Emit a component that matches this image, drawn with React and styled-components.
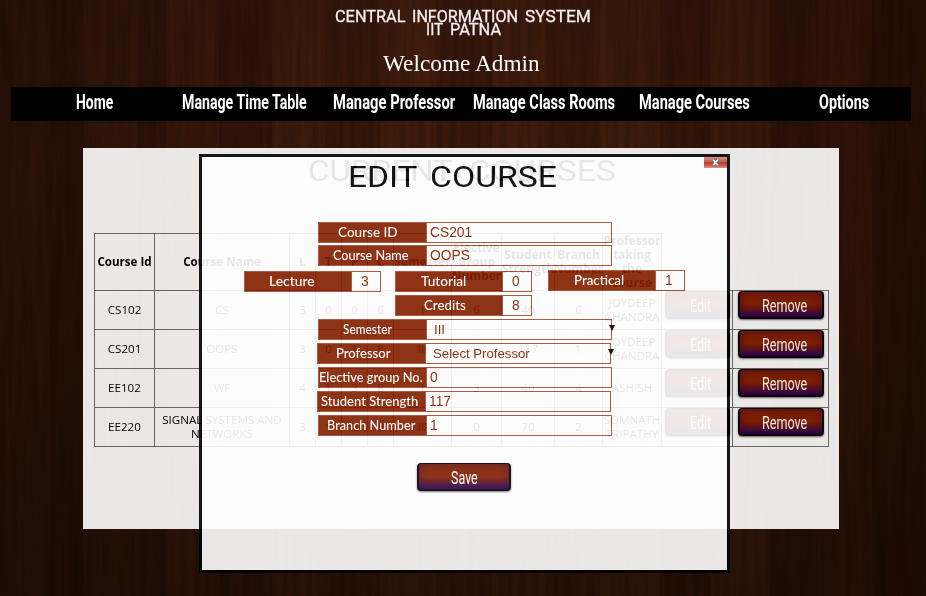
import React, { useLayoutEffect, useRef, useState } from "react";
import styled, { createGlobalStyle } from "styled-components";

const Global = createGlobalStyle`
  * { box-sizing: border-box; }
  html, body { margin: 0; padding: 0; background: #2a1006; }
  body { overflow: hidden; }
`;

const Page = styled.div`
  position: relative;
  width: 926px;
  height: 596px;
  overflow: hidden;
  padding: 0 11px;
  background:
    radial-gradient(ellipse 75% 85% at 50% 25%, rgba(0, 0, 0, 0) 20%, rgba(0, 0, 0, 0.36) 100%),
    linear-gradient(90deg, #35160a 0 50px, #301308 50px 83px, #38180b 83px 137px, #33150a 137px 166px,
      #3c190b 166px 219px, #34150a 219px 272px, #3e1b0d 272px 325px, #38170a 325px 380px,
      #401c0d 380px 436px, #3a180b 436px 492px, #401c0d 492px 545px, #3a180b 545px 600px,
      #3f1c0d 600px 660px, #36160a 660px 710px, #3e1c0d 710px 770px, #33140a 770px 818px,
      #39170a 818px 872px, #301307 872px 926px);
`;

const Grain = styled.svg`
  position: absolute;
  inset: 0;
  opacity: 0.22;
`;

const Header = styled.header`
  position: relative;
  height: 87px;
  padding-top: 10px;
  display: flex;
  flex-direction: column;
  align-items: center;
  color: #f6eff4;
  font: 400 17px/13px Roboto, sans-serif;
`;

const Welcome = styled.div`
  margin-top: 14px;
  margin-right: 3px;
  font: 23px/27px "Liberation Serif", serif;
  color: #fff;
`;

const TitleLine = styled.div`
  display: flex;
  gap: 7px;
  height: 13px;
  -webkit-text-stroke: 0.3px #f6eff4;
`;

const Nav = styled.nav`
  position: relative;
  width: 900px;
  height: 34px;
  padding-left: 8px;
  background: #000;
  display: grid;
  grid-template-columns: repeat(6, 150px);
`;

const NavItem = styled.a`
  display: flex;
  justify-content: center;
  color: #fff;
  font: 700 19.5px/31px Roboto, sans-serif;
`;

const FitBox = styled.span`
  display: block;
  flex: none;
  width: ${(p) => p.$w}px;
  white-space: nowrap;
`;

const FitInner = styled.span`
  display: inline-block;
  transform-origin: 0 50%;
`;

// Squeezes or stretches one line of text to a fixed width.
function Fit({ w, children }) {
  const ref = useRef(null);
  const [scale, setScale] = useState(1);
  useLayoutEffect(() => {
    setScale(w / ref.current.offsetWidth);
  }, [w]);
  return (
    <FitBox $w={w}>
      <FitInner ref={ref} style={{ transform: `scaleX(${scale})` }}>{children}</FitInner>
    </FitBox>
  );
}

const Panel = styled.main`
  position: relative;
  width: 756px;
  height: 381px;
  margin: 27px 0 0 72px;
  padding: 5px 0 0 11px;
  background: #fff;
  opacity: 0.9;
`;

const PanelTitle = styled.h1`
  display: flex;
  gap: 16px;
  margin: 0;
  height: 80px;
  padding-left: 214px;
  font: 400 30px/35px Roboto, sans-serif;
  color: #000;
`;

const Row = styled.div`
  display: grid;
  width: max-content;
  grid-template-columns: ${(p) => (p.$head ? "61px 135px repeat(4, 26px) 58px 50px 53px 48px 59px" : "61px 135px repeat(4, 26px) 58px 50px 53px 48px 59px 71px 96px")};
  height: ${(p) => (p.$head ? 58 : 39)}px;
  border-top: ${(p) => (p.$head ? "1px solid #6f6f6f" : "0")};
  font: ${(p) => (p.$head ? "700 12px/14px" : "400 11.6px/14px")} "Open Sans", sans-serif;
  color: #000;
`;

const Cell = styled.div`
  display: flex;
  align-items: center;
  justify-content: center;
  text-align: center;
  white-space: pre;
  min-width: 0;
  border-right: 1px solid #6f6f6f;
  border-bottom: 1px solid #6f6f6f;
  &:first-child { border-left: 1px solid #6f6f6f; }
  &:nth-child(-n + 2) { font-size: 11.6px; }
`;

const ActionCell = styled(Cell)`
  align-items: flex-start;
  justify-content: flex-start;
  padding-left: ${(p) => p.$pad}px;
  box-shadow: 0 -1px 0 #6f6f6f;
`;

const Button = styled.button`
  width: ${(p) => p.$w}px;
  height: 28px;
  padding: 1px 0 0 ${(p) => p.$pad}px;
  border: 2px solid #080004;
  border-top-width: 1px;
  border-radius: 4px;
  background: linear-gradient(#852000 0%, #852000 50%, #561028 78%, #280058 100%);
  box-shadow: inset 0 0 8px rgba(45, 0, 65, 0.65), 0 1px 2px rgba(0, 0, 0, 0.6);
  color: #fff;
  font: 400 19px/25px Roboto, sans-serif;
  text-align: left;
`;

const Modal = styled.section`
  position: absolute;
  left: 199px;
  top: 154px;
  width: 531px;
  height: 419px;
  border: 3px solid #000;
  background: #fff;
  opacity: 0.9;
`;

const ModalHead = styled.div`
  display: flex;
  justify-content: space-between;
  height: 65px;
  padding-left: 146px;
`;

const ModalTitle = styled.h2`
  display: flex;
  gap: 13px;
  margin: 2px 0 0;
  color: #000;
  font: 400 30px/35px Roboto, sans-serif;
`;

const Close = styled.button`
  display: flex;
  justify-content: center;
  width: 23px;
  height: 11px;
  padding: 0;
  border: 0;
  background: linear-gradient(#d28a7d, #bf4d3c 45%, #ba2a16 50%, #c95340 80%, #dd8f80);
`;

const Form = styled.form`
  display: flex;
  flex-direction: column;
  align-items: flex-start;
`;

const Triple = styled.div`
  display: flex;
  width: 441px;
  justify-content: space-between;
  margin: 5px 0 0 42px;
`;

const FieldBox = styled.div`
  display: flex;
  width: ${(p) => (p.$small ? 137 : 294)}px;
  height: 21px;
  margin: ${(p) => p.$top || 0}px 0 0 ${(p) => p.$left || 0}px;
  border: 1px solid #a54d30;
  background: #fff;
`;

const Label = styled.label`
  width: ${(p) => (p.$small ? 106 : 107)}px;
  flex: none;
  height: 100%;
  padding-left: ${(p) => p.$pad}px;
  background: #842000;
  color: #fff;
  font: 500 13.3px/19px Lato, sans-serif;
`;

const Value = styled.span`
  flex: 1;
  border-left: 1px solid #a54d30;
  padding-left: ${(p) => p.$pad}px;
  color: #842000;
  font: ${(p) => (p.$select ? 13.2 : 13.8)}px/19px "Liberation Sans", sans-serif;
  white-space: nowrap;
`;

const Arrow = styled.span`
  align-self: center;
  flex: none;
  width: 0;
  margin: -3px -4px 0 0;
  border: 3px solid transparent;
  border-top: 6px solid #000;
  border-bottom: 0;
`;

const SaveWrap = styled.div`
  padding: 27px 0 0 215px;
`;

function Field({ label, w, pad, value, vpad = 3, small, select, top, left }) {
  return (
    <FieldBox $small={small} $top={top} $left={left}>
      <Label $pad={pad} $small={small}><Fit w={w}>{label}</Fit></Label>
      <Value $pad={vpad} $select={select}>{value}</Value>
      {select && <Arrow />}
    </FieldBox>
  );
}

const nav = [["Home", 37], ["Manage Time Table", 125], ["Manage Professor", 122],
  ["Manage Class Rooms", 142], ["Manage Courses", 111], ["Options", 50]];

const heads = ["Course Id", "Course Name", "L", "T", "P", "C", "Semester",
  "Elective\nGroup\nNumber", "Student\nStrength", "Branch\nNumber", "Professor\ntaking\nthe\ncourse"];

const rows = [
  ["CS102", "CS", "3", "0", "0", "6", "I", "6", "40", "6", "JOYDEEP\nCHANDRA"],
  ["CS201", "OOPS", "3", "0", "1", "8", "III", "0", "117", "1", "JOYDEEP\nCHANDRA"],
  ["EE102", "WF", "4", "1", "3", "8", "I", "3", "40", "4", "ASHISH"],
  ["EE220", "SIGNAL SYSTEMS AND\nNETWORKS", "3", "1", "0", "6", "III", "0", "70", "2", "SOMNATH\nTRIPATHY"],
];

export default function App() {
  return (
    <>
      <Global />
      <Page>
        <Grain width="926" height="596" aria-hidden="true">
          <filter id="grain">
            <feTurbulence type="fractalNoise" baseFrequency="0.16 0.008" numOctaves="4" seed="8" />
            <feColorMatrix values="0 0 0 0 0  0 0 0 0 0  0 0 0 0 0  1.6 0 0 0 -0.45" />
          </filter>
          <rect width="926" height="596" filter="url(#grain)" />
        </Grain>
        <Header>
          <TitleLine><Fit w={70}>CENTRAL</Fit><Fit w={106}>INFORMATION</Fit><Fit w={66}>SYSTEM</Fit></TitleLine>
          <TitleLine><Fit w={17}>IIT</Fit><Fit w={51}>PATNA</Fit></TitleLine>
          <Welcome><Fit w={157}>Welcome Admin</Fit></Welcome>
        </Header>
        <Nav>
          {nav.map(([text, w]) => <NavItem key={text}><Fit w={w}>{text}</Fit></NavItem>)}
        </Nav>
        <Panel>
          <PanelTitle><Fit w={145}>CURRENT</Fit><Fit w={147}>COURSES</Fit></PanelTitle>
          <Row $head>{heads.map((h) => <Cell key={h}>{h}</Cell>)}</Row>
          {rows.map((r) => (
            <Row key={r[0]}>
              {r.map((c, i) => <Cell key={i}>{c}</Cell>)}
              <ActionCell $pad={3}><Button $w={65} $pad={23}><Fit w={21}>Edit</Fit></Button></ActionCell>
              <ActionCell $pad={5}><Button $w={86} $pad={22}><Fit w={45}>Remove</Fit></Button></ActionCell>
            </Row>
          ))}
        </Panel>
        <Modal>
          <ModalHead>
            <ModalTitle><Fit w={69}>EDIT</Fit><Fit w={127}>COURSE</Fit></ModalTitle>
            <Close aria-label="Close">
              <svg width="9" height="11" viewBox="0 0 9 11">
                <path d="M2 2.5L7 8.5M7 2.5L2 8.5" stroke="#555b70" strokeWidth="3.6" />
                <path d="M2.2 2.7L6.8 8.3M6.8 2.7L2.2 8.3" stroke="#fff" strokeWidth="1.6" />
              </svg>
            </Close>
          </ModalHead>
          <Form>
            <Field label="Course ID" w={60} pad={19} value="CS201" left={116} />
            <Field label="Course Name" w={75} pad={14} value="OOPS" left={116} top={2} />
            <Triple>
              <Field small label="Lecture" w={46} pad={24} value="3" vpad={9} />
              <Field small label="Tutorial" w={45} pad={25} value="0" vpad={9} left={-2} />
              <Field small label="Practical" w={50} pad={25} value="1" vpad={9} top={-1} />
            </Triple>
            <Field small label="Credits" w={42} pad={28} value="8" vpad={9} left={193} top={3} />
            <Field select label="Semester" w={49} pad={24} value="III" vpad={7} left={116} top={3} />
            <Field select label="Professor" w={54} pad={18} value="Select Professor" vpad={7} left={115} top={3} />
            <Field label="Elective group No." w={104} pad={0} value="0" left={116} top={3} />
            <Field label="Student Strength" w={97} pad={3} value="117" left={115} top={3} />
            <Field label="Branch Number" w={88} pad={8} value="1" left={116} top={3} />
            <SaveWrap><Button type="button" $w={94} $pad={32}><Fit w={27}>Save</Fit></Button></SaveWrap>
          </Form>
        </Modal>
      </Page>
    </>
  );
}
